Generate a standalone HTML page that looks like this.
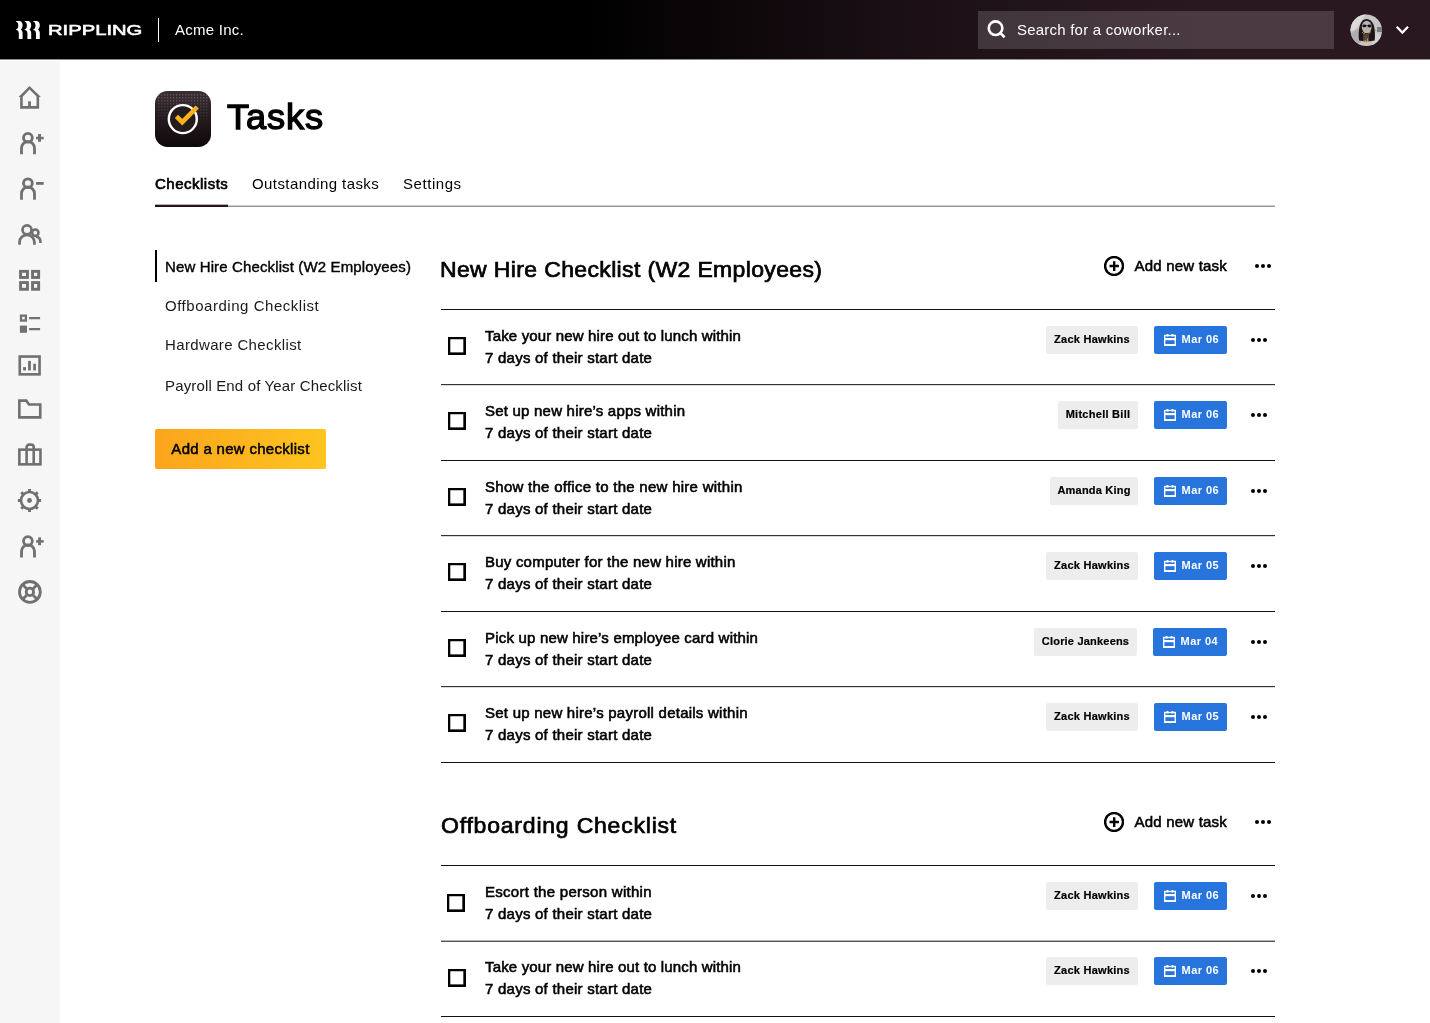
<!DOCTYPE html>
<html lang="en">
<head>
<meta charset="utf-8">
<title>Tasks - Rippling</title>
<style>
*{box-sizing:border-box;margin:0;padding:0}
html,body{width:1430px;height:1023px;overflow:hidden;background:#fff}
body{font-family:"Liberation Sans",Arial,sans-serif;color:#000;position:relative;-webkit-font-smoothing:antialiased}
.abs{position:absolute}
#wrap{position:absolute;left:0;top:0;width:1430px;height:1023px;opacity:.999;will-change:opacity}
/* top bar */
#topbg{position:absolute;left:0;top:0;width:1430px;height:60px;background:linear-gradient(90deg,#000 0,#000 580px,#1c1016 920px,#2a1820 1200px,#2a1820 1430px);box-shadow:inset 0 -1px 0 rgba(255,255,255,.55)}
#top{position:absolute;left:0;top:0;width:1430px;height:60px}
#top .div{position:absolute;left:158px;top:18px;width:1px;height:24px;background:#fff}
#top .co{position:absolute;left:175px;top:21px;font-size:15px;line-height:18px;color:#fff;letter-spacing:.26px;white-space:nowrap}
#search{position:absolute;left:978px;top:11px;width:356px;height:38px;background:rgba(255,255,255,.155)}
#search span{position:absolute;left:39px;top:10px;font-size:15px;line-height:18px;color:#fff;letter-spacing:.22px;white-space:nowrap}
/* sidebar */
#side{position:absolute;left:0;top:61px;width:60px;height:962px;background:#f6f6f6}
#side svg{position:absolute;left:0;top:0;overflow:visible}
/* page head */
#title{position:absolute;left:227px;top:96px;font-size:35px;line-height:42px;font-weight:400;-webkit-text-stroke:1.300px #000;letter-spacing:.85px;white-space:nowrap;transform-origin:0 50%;transform:scaleX(1.035)}
.tab{position:absolute;top:175px;font-size:15px;line-height:18px;white-space:nowrap;letter-spacing:.38px}
.tab.on{font-weight:400;-webkit-text-stroke:.65px #000;letter-spacing:.5px}
#tabline{position:absolute;left:155px;top:205px;width:1120px;height:2px;background:linear-gradient(#cfcfcf 0,#cfcfcf 50%,#979797 50%,#979797 100%)}
#tabon{position:absolute;left:155px;top:204px;width:73px;height:3px;background:linear-gradient(#b9b0b4 0,#b9b0b4 33.300%,#2a121c 33.300%,#2a121c 100%)}
/* left nav */
.nav{position:absolute;left:165px;font-size:15px;line-height:18px;white-space:nowrap;letter-spacing:.42px;color:#1a1a1a}
.nav.on{-webkit-text-stroke:.4px #000;letter-spacing:.13px;color:#000}
#navbar{position:absolute;left:155px;top:250px;width:2px;height:32px;background:#000}
#addbtn{position:absolute;left:155px;top:429px;width:171px;height:40px;border-radius:2px;background:linear-gradient(90deg,rgba(251,164,27,.995),rgba(254,196,31,.995));font-size:15px;line-height:40px;text-align:center;-webkit-text-stroke:.5px #000;letter-spacing:.3px;white-space:nowrap}
/* sections */
.h2{position:absolute;left:440px;font-size:21.500px;line-height:28px;white-space:nowrap;-webkit-text-stroke:.7px #000;transform-origin:0 50%;transform:scaleX(1.07)}
.addt{position:absolute;left:1134.500px;font-size:15px;line-height:18px;white-space:nowrap;-webkit-text-stroke:.55px #000;letter-spacing:.2px}
.line{position:absolute;left:441px;width:834px;height:1px;background:#111}
.row{position:absolute;left:441px;width:834px;height:75px}
.cb{position:absolute;left:7px;top:28px;width:18px;height:18px;border:2px solid #000;box-shadow:inset -.55px -.45px 0 0 #000,inset 0 0 0 .3px #000}
.tx{position:absolute;left:44px;top:16px;font-size:15px;line-height:22px;white-space:nowrap;-webkit-text-stroke:.58px #000}.tx span{display:block}
.who{position:absolute;right:137px;top:17px;height:28px;text-align:center;background:rgba(237,237,237,.995);border-radius:2px;font-size:11px;line-height:27px;font-weight:700;letter-spacing:.3px;white-space:nowrap;color:#000;-webkit-text-stroke:.2px #000}
.dt{position:absolute;left:713px;top:17px;width:73px;height:28px;background:rgba(38,115,221,.995);border-radius:2px;color:#fff;font-size:11px;line-height:27px;font-weight:700;letter-spacing:.42px;white-space:nowrap;padding-left:27.600px}
.dt svg{position:absolute;left:10px;top:8px}
.dots{position:absolute;width:16px;height:4px}
.dots i{position:absolute;top:0;width:4px;height:4px;border-radius:50%;background:#000}
.dots i:nth-child(1){left:0}.dots i:nth-child(2){left:6px}.dots i:nth-child(3){left:12px}
</style>
</head>
<body>
<div id="topbg"></div>
<div id="wrap">
<div id="top">
  <svg class="abs" style="left:16px;top:21px" width="24" height="18" viewBox="0 0 24 18"><g fill="#fff"><path d="M0 0h3.300c2.100 0 3.300 1.700 3.300 4.300 0 1.900-.700 3.300-1.800 4.100 1.100.700 1.800 2 1.800 3.600V18H2.800v-5.800c0-1.700-1-2.900-2.800-3.100V8.500C1.400 8.100 2.300 6.600 2.300 4.500S1.400.900 0 .600z"/><path transform="translate(8.600 0)" d="M0 0h3.300c2.100 0 3.300 1.700 3.300 4.300 0 1.900-.700 3.300-1.800 4.100 1.100.700 1.800 2 1.800 3.600V18H2.800v-5.800c0-1.700-1-2.900-2.800-3.100V8.500C1.400 8.100 2.300 6.600 2.300 4.500S1.400.900 0 .600z"/><path transform="translate(17.200 0)" d="M0 0h3.300c2.100 0 3.300 1.700 3.300 4.300 0 1.900-.700 3.300-1.800 4.100 1.100.700 1.800 2 1.800 3.600V18H2.800v-5.800c0-1.700-1-2.900-2.800-3.100V8.500C1.400 8.100 2.300 6.600 2.300 4.500S1.400.900 0 .600z"/></g></svg>
  <svg class="abs" style="left:48px;top:18px" width="96" height="24" viewBox="0 0 96 24"><text x="0" y="17.400" font-family="Liberation Sans, Arial, sans-serif" font-size="14.800" font-weight="400" fill="#fff" stroke="#fff" stroke-width=".6" textLength="94.300" lengthAdjust="spacingAndGlyphs">RIPPLING</text></svg>
  <div class="div"></div>
  <div class="co">Acme Inc.</div>
  <div id="search">
    <svg class="abs" style="left:8px;top:8px" width="22" height="22" viewBox="0 0 22 22" fill="none" stroke="#fff" stroke-width="2.600"><circle cx="9.550" cy="9.200" r="6.800"/><path d="M14.200 13.900L18.600 18.200" stroke-linecap="butt"/></svg>
    <span>Search for a coworker...</span>
  </div>
  <svg class="abs" style="left:1346px;top:10px" width="40" height="40" viewBox="0 0 40 40"><defs><clipPath id="av"><circle cx="20.300" cy="20.300" r="15.800"/></clipPath></defs><g clip-path="url(#av)"><rect width="40" height="40" fill="#c6c6c6"/><path d="M4 4h16l-9 14-7 4z" fill="#dcdcdc"/><path d="M4 24l8-5 3 14H4z" fill="#b0b0b0"/><path d="M31 17h6v5h-6z" fill="#7d7d7d"/><path d="M28 22l8 4v10H26z" fill="#d4d4d4"/><path d="M13.200 30.500C12.400 26 12.600 19 14 15 15.300 11 17.500 8.900 20.400 8.900 23.600 8.900 26.300 11 27.700 15 29 19 29.300 26 28.600 30.500 26 31.500 16 31.500 13.200 30.500z" fill="#1f1418"/><ellipse cx="20.700" cy="17" rx="4.900" ry="6.300" fill="#b8b4b4"/><rect x="17.200" y="24" width="5.900" height="7.200" fill="#4c4648"/><ellipse cx="18.300" cy="15.900" rx="2" ry="1.400" fill="#1a1014"/><ellipse cx="23.500" cy="16" rx="2" ry="1.400" fill="#1a1014"/><path d="M19.800 15.600h2.200" stroke="#1a1014" stroke-width=".6"/><g fill="#e0a11d"><circle cx="11.400" cy="19.400" r=".7"/><circle cx="21.300" cy="18.400" r=".7"/><circle cx="29.500" cy="20.400" r=".7"/><circle cx="17.300" cy="31.400" r=".6"/></g><path d="M16.200 22.300l1.400 1 1.400-.3M22.200 23l1.400 0 1.200-1.600M19.200 30v1.600M20.400 31.600v1M21.400 28.500v3.600M22.500 30.800v.8" stroke="#e0a11d" stroke-width="1" fill="none"/></g></svg>
  <svg class="abs" style="left:1395px;top:25px" width="15" height="11" viewBox="0 0 15 11" fill="none" stroke="#fff" stroke-width="2.300"><path d="M1.700 1.800L7.350 7.500 13 1.800"/></svg>
</div>

<div id="side"></div>
<svg class="abs" style="left:0;top:0" width="60" height="1023" viewBox="0 0 60 1023" fill="none" stroke="#707070" stroke-width="2.600"><path d="M18.600 96.900L29.500 85.900 40.900 96.900H37.200L29.500 89.600 22.400 96.900Z" fill="#707070" stroke="none"/><path d="M21.450 95.500V107.400H37.850V95.500"/><path d="M29.500 101.300V106.500" stroke-width="2.800"/>
<circle cx="27.9" cy="137.8" r="4.400" stroke-width="2.800"/><path d="M21.50 154.30V148.10a6.500 6.500 0 0 1 13 0V154.30" stroke-width="2.800"/><path d="M36.050 138.050h7.650" stroke-width="2.500"/><path d="M39.550 134v7.800" stroke-width="2.900"/>
<circle cx="27.9" cy="183.2" r="4.400" stroke-width="2.800"/><path d="M21.50 199.70V193.50a6.500 6.500 0 0 1 13 0V199.70" stroke-width="2.800"/><path d="M36.050 183.400h7.650" stroke-width="2.800"/>
<circle cx="27" cy="229.800" r="4.500" stroke-width="2.650"/><path d="M19.500 244.800V242.250a7.450 7.450 0 0 1 14.900 0V244.800" stroke-width="2.700"/><circle cx="35.300" cy="232.700" r="3.150" stroke-width="2.600"/><path d="M36 236.600C38.600 236.900 40.400 239 40.400 241.600V242.900" stroke-width="2.600"/>
<g stroke-width="2.900"><rect x="20.550" y="271.350" width="6.900" height="6.100"/><rect x="32.550" y="271.350" width="6.100" height="6.100"/><rect x="20.550" y="282.550" width="6.900" height="6.700"/><rect x="32.550" y="282.550" width="6.100" height="6.700"/></g>
<rect x="21" y="315.650" width="4.900" height="4.900" stroke-width="2.300"/><rect x="19.900" y="325.600" width="7.100" height="7.200" fill="#707070" stroke="none"/><path d="M29.100 318.100h11M29.100 329.200h11" stroke-width="2.300"/>
<rect x="19.750" y="356.550" width="19.800" height="17.800"/><g stroke="none" fill="#707070"><rect x="23.100" y="367.100" width="2.900" height="3.300"/><rect x="28.100" y="360.900" width="2.800" height="9.500"/><rect x="33.200" y="363.750" width="2.700" height="6.650"/></g>
<path d="M19.350 400.650H26.300L29 404.550H40.250V417.350H19.350Z"/>
<rect x="19.350" y="449.650" width="21.100" height="14.700"/><path d="M26.600 464.300V447.300a2.700 2.700 0 0 1 2.700-2.700h1.700a2.700 2.700 0 0 1 2.700 2.700V464.300"/>
<circle cx="29.500" cy="500.500" r="8.500" stroke-width="2.600"/><path d="M38.70 500.50L41.10 500.50M36.01 507.01L37.70 508.70M29.50 509.70L29.50 512.10M22.99 507.01L21.30 508.70M20.30 500.50L17.90 500.50M22.99 493.99L21.30 492.30M29.50 491.30L29.50 488.90M36.01 493.99L37.70 492.30" stroke-width="2.900"/><circle cx="29.500" cy="500.500" r="2.400" fill="#707070" stroke="none"/>
<circle cx="27.9" cy="541.1" r="4.400" stroke-width="2.800"/><path d="M21.50 557.60V551.40a6.500 6.500 0 0 1 13 0V557.60" stroke-width="2.800"/><path d="M36.050 541.400h7.650" stroke-width="2.500"/><path d="M39.550 537.400v7.800" stroke-width="2.900"/>
<circle cx="29.9" cy="591.9" r="10.400" stroke-width="2.800"/><circle cx="29.9" cy="591.9" r="3.700" stroke-width="2.800"/><path d="M26.65 588.65L23.11 585.11M26.65 595.15L23.11 598.69M33.15 588.65L36.69 585.11M33.15 595.15L36.69 598.69" stroke-width="2.800"/></svg>

<svg class="abs" style="left:155px;top:91px" width="56" height="56" viewBox="0 0 56 56"><defs><linearGradient id="ig" x1="0" y1="0" x2="0" y2="1"><stop offset="0" stop-color="#3b2f34"/><stop offset=".5" stop-color="#231a1e"/><stop offset="1" stop-color="#0e080b"/></linearGradient><linearGradient id="dg" x1="0" y1="0" x2="0" y2="1"><stop offset="0" stop-color="#fff" stop-opacity=".0"/><stop offset=".08" stop-color="#fff" stop-opacity=".45"/><stop offset=".3" stop-color="#fff" stop-opacity=".22"/><stop offset=".62" stop-color="#fff" stop-opacity="0"/></linearGradient><pattern id="dp" width="3" height="3" patternUnits="userSpaceOnUse"><circle cx=".8" cy=".8" r=".62" fill="#fff"/></pattern><mask id="dm"><rect width="56" height="56" fill="url(#dg)"/></mask><clipPath id="ic"><rect width="56" height="56" rx="12.500"/></clipPath></defs><rect width="56" height="56" rx="12.500" fill="url(#ig)"/><g clip-path="url(#ic)"><rect x="3" y="2" width="50" height="40" fill="url(#dp)" mask="url(#dm)"/></g><circle cx="27.800" cy="28.100" r="14" fill="#241b1f" stroke="#fff" stroke-width="2.400"/><path d="M21.450 25.300L27.260 31.200 42.200 16" fill="none" stroke="#fcb118" stroke-width="4.600"/></svg>
<div id="title">Tasks</div>

<div class="tab on" style="left:155px">Checklists</div>
<div class="tab" style="left:252px;letter-spacing:.42px">Outstanding tasks</div>
<div class="tab" style="left:403px;letter-spacing:.55px">Settings</div>
<div id="tabline"></div>
<div id="tabon"></div>

<div id="navbar"></div>
<div class="nav on" style="top:258px">New Hire Checklist (W2 Employees)</div>
<div class="nav" style="top:297px;letter-spacing:.53px">Offboarding Checklist</div>
<div class="nav" style="top:336px;letter-spacing:.36px">Hardware Checklist</div>
<div class="nav" style="top:377px;letter-spacing:.15px">Payroll End of Year Checklist</div>
<div id="addbtn">Add a new checklist</div>

<div class="h2" style="left:440px;top:256px;letter-spacing:0.33px">New Hire Checklist (W2 Employees)</div>
<svg class="abs" style="left:1104px;top:256px" width="20" height="20" viewBox="0 0 20 20" fill="none" stroke="#000"><circle cx="10.050" cy="10" r="8.950" stroke-width="2.500"/><path d="M10.200 5.200v9.700M5.500 10.050h9.400" stroke-width="2.400"/></svg>
<div class="addt" style="top:257px">Add new task</div>
<div class="dots" style="left:1255px;top:264px"><i></i><i></i><i></i></div>
<div class="line" style="top:309px"></div>
<div class="row" style="top:309px"><div class="cb"></div><div class="tx"><span style="letter-spacing:0.155px">Take your new hire out to lunch within</span><span style="letter-spacing:0.24px">7 days of their start date</span></div><div class="who" style="width:92px;right:137px;letter-spacing:0.27px">Zack Hawkins</div><div class="dt" style="left:713px;width:73px"><svg width="12" height="12" viewBox="0 0 12 12" fill="none" stroke="#fff"><rect x=".7" y="1.500" width="10.600" height="9.800" stroke-width="1.400"/><path d="M.7 5.100h10.600" stroke-width="2.200"/><path d="M.7 10.900h10.600" stroke-width="1.600"/><path d="M3.500 0v2.600M8.500 0v2.600" stroke-width="1.700"/></svg>Mar 06</div><div class="dots" style="left:810px;top:29px"><i></i><i></i><i></i></div></div>
<div class="line" style="top:384px;height:2px;background:linear-gradient(#3a3035 0,#3a3035 50%,#d9d9d9 50%,#d9d9d9 100%)"></div>
<div class="row" style="top:384px"><div class="cb"></div><div class="tx"><span style="letter-spacing:0.216px">Set up new hire’s apps within</span><span style="letter-spacing:0.24px">7 days of their start date</span></div><div class="who" style="width:80px;right:137px;letter-spacing:0.27px">Mitchell Bill</div><div class="dt" style="left:713px;width:73px"><svg width="12" height="12" viewBox="0 0 12 12" fill="none" stroke="#fff"><rect x=".7" y="1.500" width="10.600" height="9.800" stroke-width="1.400"/><path d="M.7 5.100h10.600" stroke-width="2.200"/><path d="M.7 10.900h10.600" stroke-width="1.600"/><path d="M3.500 0v2.600M8.500 0v2.600" stroke-width="1.700"/></svg>Mar 06</div><div class="dots" style="left:810px;top:29px"><i></i><i></i><i></i></div></div>
<div class="line" style="top:460px"></div>
<div class="row" style="top:460px"><div class="cb"></div><div class="tx"><span style="letter-spacing:0.27px">Show the office to the new hire within</span><span style="letter-spacing:0.24px">7 days of their start date</span></div><div class="who" style="width:88px;right:137px;letter-spacing:0.2px">Amanda King</div><div class="dt" style="left:713px;width:73px"><svg width="12" height="12" viewBox="0 0 12 12" fill="none" stroke="#fff"><rect x=".7" y="1.500" width="10.600" height="9.800" stroke-width="1.400"/><path d="M.7 5.100h10.600" stroke-width="2.200"/><path d="M.7 10.900h10.600" stroke-width="1.600"/><path d="M3.500 0v2.600M8.500 0v2.600" stroke-width="1.700"/></svg>Mar 06</div><div class="dots" style="left:810px;top:29px"><i></i><i></i><i></i></div></div>
<div class="line" style="top:535px;height:2px;background:linear-gradient(#3a3035 0,#3a3035 50%,#d9d9d9 50%,#d9d9d9 100%)"></div>
<div class="row" style="top:535px"><div class="cb"></div><div class="tx"><span style="letter-spacing:0.22px">Buy computer for the new hire within</span><span style="letter-spacing:0.24px">7 days of their start date</span></div><div class="who" style="width:92px;right:137px;letter-spacing:0.27px">Zack Hawkins</div><div class="dt" style="left:713px;width:73px"><svg width="12" height="12" viewBox="0 0 12 12" fill="none" stroke="#fff"><rect x=".7" y="1.500" width="10.600" height="9.800" stroke-width="1.400"/><path d="M.7 5.100h10.600" stroke-width="2.200"/><path d="M.7 10.900h10.600" stroke-width="1.600"/><path d="M3.500 0v2.600M8.500 0v2.600" stroke-width="1.700"/></svg>Mar 05</div><div class="dots" style="left:810px;top:29px"><i></i><i></i><i></i></div></div>
<div class="line" style="top:611px"></div>
<div class="row" style="top:611px"><div class="cb"></div><div class="tx"><span style="letter-spacing:0.19px">Pick up new hire’s employee card within</span><span style="letter-spacing:0.24px">7 days of their start date</span></div><div class="who" style="width:103px;right:138px;letter-spacing:0.2px">Clorie Jankeens</div><div class="dt" style="left:712px;width:74px"><svg width="12" height="12" viewBox="0 0 12 12" fill="none" stroke="#fff"><rect x=".7" y="1.500" width="10.600" height="9.800" stroke-width="1.400"/><path d="M.7 5.100h10.600" stroke-width="2.200"/><path d="M.7 10.900h10.600" stroke-width="1.600"/><path d="M3.500 0v2.600M8.500 0v2.600" stroke-width="1.700"/></svg>Mar 04</div><div class="dots" style="left:810px;top:29px"><i></i><i></i><i></i></div></div>
<div class="line" style="top:686px;height:2px;background:linear-gradient(#3a3035 0,#3a3035 50%,#d9d9d9 50%,#d9d9d9 100%)"></div>
<div class="row" style="top:686px"><div class="cb"></div><div class="tx"><span style="letter-spacing:0.24px">Set up new hire’s payroll details within</span><span style="letter-spacing:0.24px">7 days of their start date</span></div><div class="who" style="width:92px;right:137px;letter-spacing:0.27px">Zack Hawkins</div><div class="dt" style="left:713px;width:73px"><svg width="12" height="12" viewBox="0 0 12 12" fill="none" stroke="#fff"><rect x=".7" y="1.500" width="10.600" height="9.800" stroke-width="1.400"/><path d="M.7 5.100h10.600" stroke-width="2.200"/><path d="M.7 10.900h10.600" stroke-width="1.600"/><path d="M3.500 0v2.600M8.500 0v2.600" stroke-width="1.700"/></svg>Mar 05</div><div class="dots" style="left:810px;top:29px"><i></i><i></i><i></i></div></div>
<div class="line" style="top:762px"></div>
<div class="h2" style="left:441px;top:812px;letter-spacing:0.735px">Offboarding Checklist</div>
<svg class="abs" style="left:1104px;top:812px" width="20" height="20" viewBox="0 0 20 20" fill="none" stroke="#000"><circle cx="10.050" cy="10" r="8.950" stroke-width="2.500"/><path d="M10.200 5.200v9.700M5.500 10.050h9.400" stroke-width="2.400"/></svg>
<div class="addt" style="top:813px">Add new task</div>
<div class="dots" style="left:1255px;top:820px"><i></i><i></i><i></i></div>
<div class="line" style="top:865px"></div>
<div class="row" style="top:865px"><div class="cb" style="left:6px;top:29px"></div><div class="tx"><span style="letter-spacing:0.28px">Escort the person within</span><span style="letter-spacing:0.24px">7 days of their start date</span></div><div class="who" style="width:92px;right:137px;letter-spacing:0.27px">Zack Hawkins</div><div class="dt" style="left:713px;width:73px"><svg width="12" height="12" viewBox="0 0 12 12" fill="none" stroke="#fff"><rect x=".7" y="1.500" width="10.600" height="9.800" stroke-width="1.400"/><path d="M.7 5.100h10.600" stroke-width="2.200"/><path d="M.7 10.900h10.600" stroke-width="1.600"/><path d="M3.500 0v2.600M8.500 0v2.600" stroke-width="1.700"/></svg>Mar 06</div><div class="dots" style="left:810px;top:29px"><i></i><i></i><i></i></div></div>
<div class="line" style="top:940px;height:2px;background:linear-gradient(#b4b4b4 0,#b4b4b4 50%,#555 50%,#555 100%)"></div>
<div class="row" style="top:940px"><div class="cb" style="top:29px"></div><div class="tx"><span style="letter-spacing:0.155px">Take your new hire out to lunch within</span><span style="letter-spacing:0.24px">7 days of their start date</span></div><div class="who" style="width:92px;right:137px;letter-spacing:0.27px">Zack Hawkins</div><div class="dt" style="left:713px;width:73px"><svg width="12" height="12" viewBox="0 0 12 12" fill="none" stroke="#fff"><rect x=".7" y="1.500" width="10.600" height="9.800" stroke-width="1.400"/><path d="M.7 5.100h10.600" stroke-width="2.200"/><path d="M.7 10.900h10.600" stroke-width="1.600"/><path d="M3.500 0v2.600M8.500 0v2.600" stroke-width="1.700"/></svg>Mar 06</div><div class="dots" style="left:810px;top:29px"><i></i><i></i><i></i></div></div>
<div class="line" style="top:1016px"></div>
</div>
</body>
</html>
